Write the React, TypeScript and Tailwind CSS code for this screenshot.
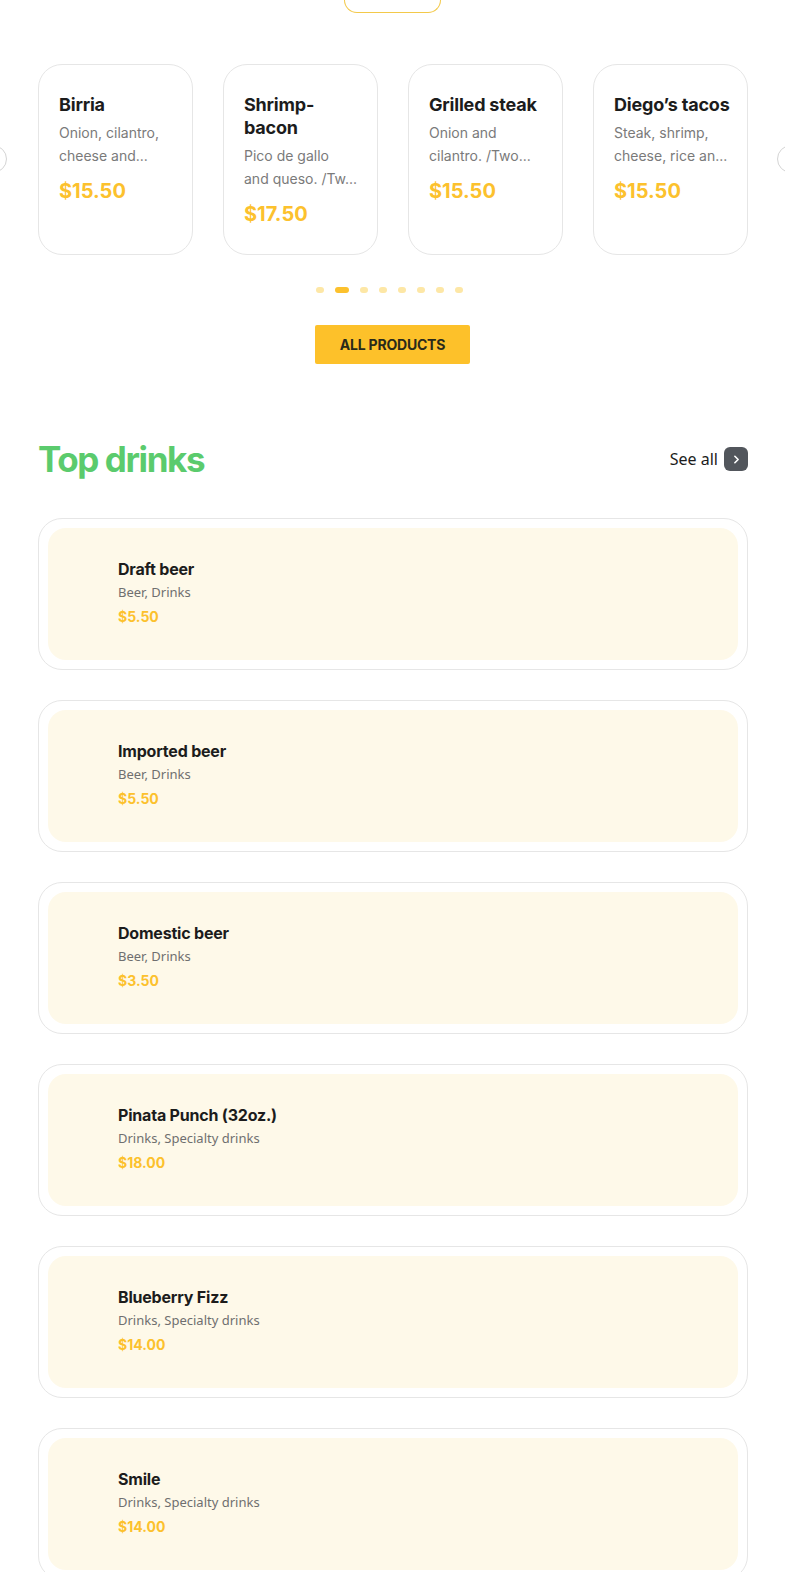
import { ChevronRight } from 'lucide-react';

const products = [
    { name: 'Birria', desc: ['Onion, cilantro,', 'cheese and...'], price: '$15.50' },
    { name: 'Shrimp-bacon', desc: ['Pico de gallo', 'and queso. /Tw...'], price: '$17.50' },
    { name: 'Grilled steak', desc: ['Onion and', 'cilantro. /Two...'], price: '$15.50' },
    { name: 'Diego’s tacos', desc: ['Steak, shrimp,', 'cheese, rice an...'], price: '$15.50' },
];

const drinks = [
    { name: 'Draft beer', cats: 'Beer, Drinks', price: '$5.50' },
    { name: 'Imported beer', cats: 'Beer, Drinks', price: '$5.50' },
    { name: 'Domestic beer', cats: 'Beer, Drinks', price: '$3.50' },
    { name: 'Pinata Punch (32oz.)', cats: 'Drinks, Specialty drinks', price: '$18.00' },
    { name: 'Blueberry Fizz', cats: 'Drinks, Specialty drinks', price: '$14.00' },
    { name: 'Smile', cats: 'Drinks, Specialty drinks', price: '$14.00' },
];

const font = { fontFamily: 'Inter, "Noto Sans", sans-serif' };

export default function App() {
    return (
        <div className="w-[785px] min-h-[1572px] bg-white overflow-hidden relative" style={font}>
            {/* cut-off outline button at top */}
            <div className="flex justify-center">
                <div className="w-[97px] h-[13px] border-x border-b border-[#f3c94a] rounded-b-[14px]" />
            </div>

            {/* product carousel */}
            <div className="relative mt-[51px]">
                <div className="absolute left-[-21px] top-[81px] w-[28px] h-[28px] rounded-full border border-[#d4d4d4] bg-white" />
                <div className="absolute left-[777px] top-[81px] w-[28px] h-[28px] rounded-full border border-[#d4d4d4] bg-white" />
                <div className="flex gap-[30px] pl-[38px]">
                    {products.map((p) => (
                        <div key={p.name} className="w-[155px] h-[191px] shrink-0 rounded-[24px] border border-[#e6e6e6] pt-[28px] pl-[20px] pr-[14px]">
                            <h3 className="text-[18px] leading-[23px] font-bold text-[#1c1c1c] tracking-[-0.2px]">{p.name}</h3>
                            <p className="mt-[5px] text-[14px] leading-[23px] text-[#7a7a7a]">
                                {p.desc.map((line) => (
                                    <span key={line} className="block whitespace-nowrap">{line}</span>
                                ))}
                            </p>
                            <div className="mt-[11px] text-[20px] leading-[26px] font-bold text-[#fcc12d]">{p.price}</div>
                        </div>
                    ))}
                </div>
            </div>

            {/* dots */}
            <div className="flex justify-center items-center gap-[11px] mt-[32px] h-[6px] pr-[6px]">
                {Array.from({ length: 8 }).map((_, i) => (
                    <span key={i} className={i === 1 ? 'w-[14px] h-[6px] rounded-full bg-[#fcc12d]' : 'w-[8px] h-[6px] rounded-full bg-[#fde7a6]'} />
                ))}
            </div>

            <div className="flex justify-center mt-[32px]">
                <button className="w-[155px] h-[39px] bg-[#fdc12a] rounded-[2px] text-[14px] font-bold text-[#2a2a1a] tracking-[-0.2px]">
                    ALL PRODUCTS
                </button>
            </div>

            {/* top drinks */}
            <div className="pl-[38px] pr-[37px] mt-[73px]">
                <div className="flex items-center justify-between h-[44px]">
                    <h2 className="text-[35px] leading-[44px] font-bold text-[#5bcb6d] tracking-[-1.4px]">Top drinks</h2>
                    <div className="flex items-center gap-[6px]">
                        <span className="text-[16px] text-[#1c1c1c]" style={{ fontFamily: '"Noto Sans", sans-serif' }}>See all</span>
                        <span className="w-[24px] h-[24px] rounded-[6px] bg-[#52565c] flex items-center justify-center">
                            <ChevronRight size={13} strokeWidth={3} color="#ffffff" />
                        </span>
                    </div>
                </div>

                <div className="mt-[37px] flex flex-col gap-[30px]">
                    {drinks.map((d) => (
                        <div key={d.name} className="h-[152px] rounded-[24px] border border-[#e6e6e6] p-[9px]">
                            <div className="h-full rounded-[18px] bg-[#fef9e9] pl-[70px] pt-[30px]">
                                <h3 className="text-[16px] leading-[22px] font-bold text-[#1c1c1c] tracking-[-0.2px]">{d.name}</h3>
                                <p className="mt-[2px] text-[13px] leading-[20px] text-[#6f6f6f]" style={{ fontFamily: '"Noto Sans", sans-serif' }}>{d.cats}</p>
                                <div className="mt-[5px] text-[14px] leading-[20px] font-bold text-[#fcc12d]">{d.price}</div>
                            </div>
                        </div>
                    ))}
                </div>
            </div>
        </div>
    );
}
